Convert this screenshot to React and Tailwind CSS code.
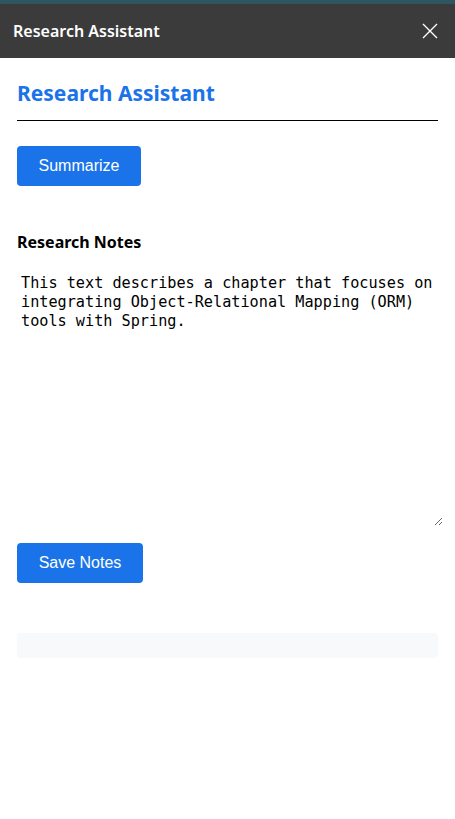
import React, { useState } from 'react';

const sans = { fontFamily: '"Noto Sans", "Open Sans", sans-serif' };
const arial = { fontFamily: '"Liberation Sans", Arial, sans-serif' };

function CloseIcon() {
  return (
    <svg width="16" height="16" viewBox="0 0 16 16" fill="none" stroke="currentColor" strokeWidth="1.4">
      <path d="M1 1 L15 15 M15 1 L1 15" />
    </svg>
  );
}

export default function App() {
  const [notes, setNotes] = useState(
    'This text describes a chapter that focuses on integrating Object-Relational Mapping (ORM) tools with Spring.'
  );

  return (
    <div className="w-[455px] h-[819px] bg-white flex flex-col">
      {/* window strip */}
      <div className="h-[4px] bg-[#2f5560]" />

      {/* Side panel header */}
      <header className="h-[54px] bg-[#3b3b3b] flex items-center justify-between pl-[13px] pr-[17px]">
        <span className="text-white text-[16px] font-semibold" style={sans}>Research Assistant</span>
        <button className="text-white">
          <CloseIcon />
        </button>
      </header>

      <main className="px-[17px] pt-[20px] flex flex-col">
        <h1 className="text-[#1a73e8] text-[21px] font-bold leading-[30px] pb-[12px] border-b border-black" style={sans}>
          Research Assistant
        </h1>

        <div className="mt-[25px]">
          <button className="w-[124px] h-[40px] bg-[#1a73e8] text-white text-[16px] rounded-[4px]" style={arial}>
            Summarize
          </button>
        </div>

        <h2 className="mt-[45px] text-[16px] font-bold text-black leading-[22px]" style={sans}>
          Research Notes
        </h2>

        <textarea
          className="mt-[17px] w-[426px] h-[256px] p-[4px] text-[15.2px] leading-[19px] text-black outline-none border-0"
          style={{ fontFamily: '"DejaVu Sans Mono", "Liberation Mono", monospace' }}
          value={notes}
          onChange={(e) => setNotes(e.target.value)}
        />

        <div className="mt-[17px]">
          <button className="w-[126px] h-[40px] bg-[#1a73e8] text-white text-[16px] rounded-[4px]" style={arial}>
            Save Notes
          </button>
        </div>

        <div className="mt-[50px] h-[25px] bg-[#f8f9fa] rounded-[4px]" />
      </main>
    </div>
  );
}
